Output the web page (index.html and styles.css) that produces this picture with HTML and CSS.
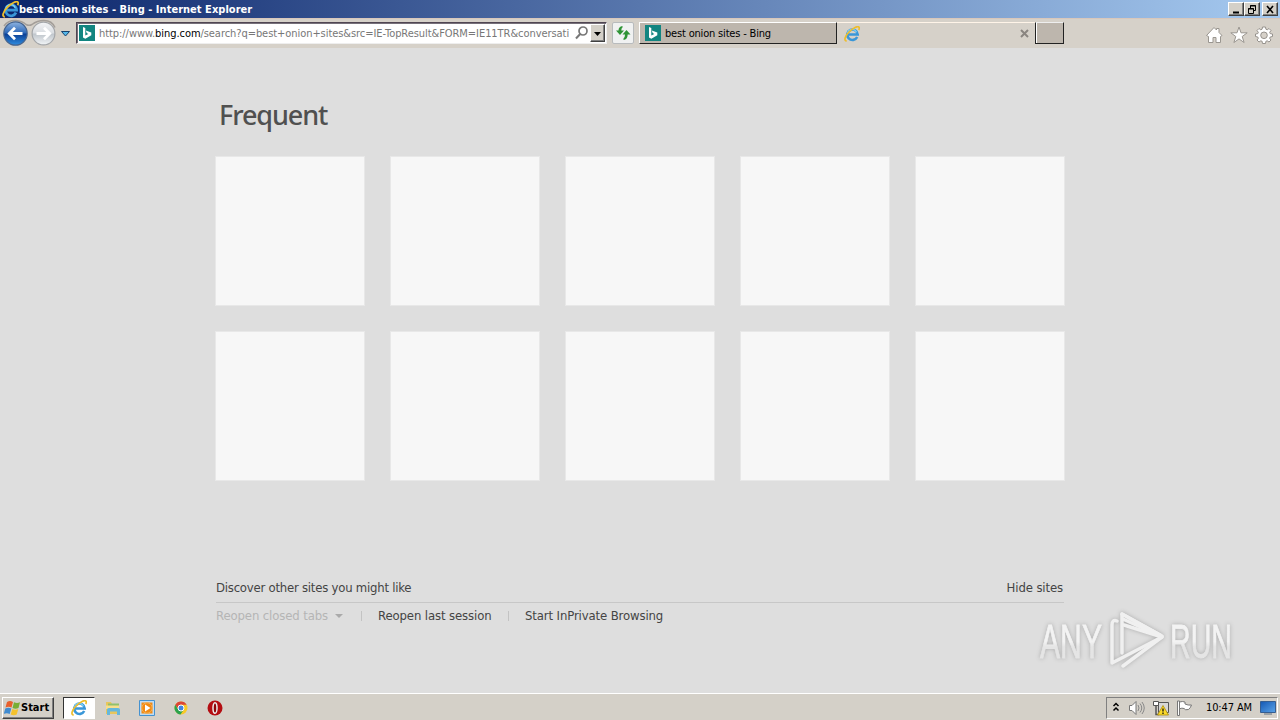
FILE: index.html
```html
<!DOCTYPE html>
<html lang="en">
<head>
    <meta charset="UTF-8">
    <title>best onion sites - Bing - Internet Explorer</title>
    <link rel="stylesheet" href="styles.css">
</head>
<body>
    <svg class="defs" width="0" height="0">
        <defs>
            <linearGradient id="blue" x1="0" y1="0" x2="0" y2="1">
                <stop offset="0" stop-color="#8fb4e0"/>
                <stop offset=".48" stop-color="#2d68b8"/>
                <stop offset=".52" stop-color="#0b3f95"/>
                <stop offset="1" stop-color="#2f8de0"/>
            </linearGradient>
            <linearGradient id="silver" x1="0" y1="0" x2="0" y2="1">
                <stop offset="0" stop-color="#f4f5f7"/>
                <stop offset=".48" stop-color="#d9dde1"/>
                <stop offset=".52" stop-color="#bfc5cb"/>
                <stop offset="1" stop-color="#f2f5f7"/>
            </linearGradient>
            <linearGradient id="screen" x1="0" y1="0" x2="1" y2="1">
                <stop offset="0" stop-color="#1458b4"/>
                <stop offset="1" stop-color="#5ba4e8"/>
            </linearGradient>
            <linearGradient id="letters" x1="0" y1="0" x2="0" y2="1">
                <stop offset=".5" stop-color="#f3f3f3"/>
                <stop offset=".6" stop-color="#e5e5e5"/>
            </linearGradient>
        </defs>
        <symbol id="ie" viewBox="0 0 16 16">
            <path d="M13.2 11A5.2 5.2 0 1 1 13.7 8.500H4.500" fill="none" stroke="#3a97d8" stroke-width="2.600"/>
            <path d="M3.500 7.300a4.700 4.700 0 0 1 9-1" fill="none" stroke="#7fd0f5" stroke-width="1.200"/>
            <path d="M2.700 14.800C-.5 15 1 10 5 6S14-.5 15 1.200c.5.800.2 1.800-.3 2.800" fill="none" stroke="#edbd2d" stroke-width="1.700"/>
        </symbol>
        <symbol id="bing" viewBox="0 0 16 16">
            <path d="M0 0h16v16H0z" fill="#128580"/>
            <path d="M4 2l2.300.9v7.700l3-1.700-1.600-.8-.9-2.500 5.500 2v2.600L6.300 13.700 4 12.400z" fill="#fff"/>
        </symbol>
    </svg>

    <header class="titlebar">
        <svg class="app-icon"><use href="#ie"/></svg>
        <h1>best onion sites - Bing - Internet Explorer</h1>
        <div class="window-buttons">
            <button><svg viewBox="0 0 14 11"><path d="M4 8.500h6" stroke="#000" stroke-width="2"/></svg></button>
            <button><svg viewBox="0 0 14 11"><path d="M5.500 4V1.500h5v5H9M5 2h6M3.500 4.500h5v5h-5zM3 5h6" fill="none" stroke="#000"/></svg></button>
            <button class="close"><svg viewBox="0 0 14 11"><path d="M4 2l6 7M10 2L4 9" stroke="#000" stroke-width="1.600"/></svg></button>
        </div>
    </header>

    <nav class="toolbar">
        <svg class="history" viewBox="0 0 74 30">
            <path d="M4 8Q8 2 16 2.500q6 .5 10 4 3 1.500 6 0 5-4 12-4 8 0 11 7" fill="none" stroke="#a39e99" stroke-width="1.500"/>
            <circle cx="15.500" cy="15.500" r="11.700" fill="url(#blue)" stroke="#46648e" stroke-width="1.200"/>
            <path d="M22.500 15.500H10M15 9.800l-5.700 5.700 5.700 5.700" fill="none" stroke="#fff" stroke-width="2.800"/>
            <circle cx="43.500" cy="15.500" r="11.400" fill="url(#silver)" stroke="#a3a6a9" stroke-width="1.200"/>
            <path d="M36.500 15.500H49M44 9.800l5.700 5.700-5.700 5.700" fill="none" stroke="#fff" stroke-width="2.800"/>
            <path d="M61.500 13.500h8l-4 4.500z" fill="#55b8ea" stroke="#17436e"/>
        </svg>
        <div class="address">
            <svg class="site-icon"><use href="#bing"/></svg>
            <span class="url">http://www.<b>bing.com</b>/search?q=best+onion+sites&amp;src=IE-TopResult&amp;FORM=IE11TR&amp;conversati</span>
            <svg class="search" viewBox="0 0 16 16"><circle cx="9" cy="6" r="4" fill="none" stroke="#777" stroke-width="1.700"/><path d="M6.200 9L2 13.500" stroke="#777" stroke-width="2"/></svg>
            <button class="dropdown"><svg viewBox="0 0 13 15"><path d="M3 6h7L6.500 10z"/></svg></button>
        </div>
        <button class="refresh"><svg viewBox="0 0 20 20"><g fill="#2f9436"><path d="M9.500 3Q5.500 3.500 5.500 7.500H3L7 12l4-4.500H8.300q0-2.500 1.200-3z"/><path d="M10.500 17q4-.5 4.200-5.500H17.500L13.500 7l-4 4.500h2.500q0 3-1.500 4z"/></g></svg></button>
        <div class="tab active">
            <svg><use href="#bing"/></svg>
            <span>best onion sites - Bing</span>
        </div>
        <div class="tab">
            <svg><use href="#ie"/></svg>
            <svg class="tab-close" viewBox="0 0 9 9"><path d="M1 1l7 7M8 1L1 8" stroke="#8a8580" stroke-width="2"/></svg>
        </div>
        <button class="new-tab"></button>
        <div class="tools">
            <svg viewBox="0 0 18 18"><path d="M1.500 9.500L9 1.500l2.500 2.500V2.500h2.500v4l3 3-1.500 1V16.500h-4.500v-5H8v5H3.500v-6z" fill="#fff" stroke="#9a9690"/></svg>
            <svg viewBox="0 0 18 18"><path d="M9 1l2 5.800h6.200l-5 3.700 1.900 6L9 12.900 3.900 16.500l1.900-6-5-3.700H7z" fill="#fff" stroke="#9a9690"/></svg>
            <svg viewBox="0 0 18 18"><path d="M7.500 1h3l.4 2.200 1.300.6L14 2.500 16 4.500l-1.300 1.800.5 1.300 2.300.4v2.500l-2.300.5-.5 1.300L16 14l-2 2-1.800-1.200-1.300.5-.4 2.200h-3l-.4-2.200-1.300-.5L4 16 2 14l1.300-1.700-.5-1.300L.5 10.500V8l2.300-.4.500-1.300L2 4.500l2-2 1.800 1.300 1.300-.6z" fill="#fff" stroke="#96928d"/><circle cx="9" cy="9.300" r="3.300" fill="#d6d1c9" stroke="#96928d"/></svg>
        </div>
    </nav>

    <main class="page">
        <h2>Frequent</h2>
        <div class="tiles">
            <div class="tile"></div>
            <div class="tile"></div>
            <div class="tile"></div>
            <div class="tile"></div>
            <div class="tile"></div>
            <div class="tile"></div>
            <div class="tile"></div>
            <div class="tile"></div>
            <div class="tile"></div>
            <div class="tile"></div>
        </div>
        <div class="discover">
            <a class="other-sites">Discover other sites you might like</a>
            <a class="hide-sites">Hide sites</a>
        </div>
        <div class="session">
            <a class="closed-tabs">Reopen closed tabs</a>
            <i class="arrow"></i>
            <i class="divider"></i>
            <a class="last-session">Reopen last session</a>
            <i class="divider"></i>
            <a class="private">Start InPrivate Browsing</a>
        </div>
        <svg class="watermark" viewBox="0 0 240 80">
            <g fill="url(#letters)" stroke="url(#letters)" stroke-width=".8">
                <text x="20" y="57" textLength="62" lengthAdjust="spacingAndGlyphs">ANY</text>
                <text x="150" y="57" textLength="62" lengthAdjust="spacingAndGlyphs">RUN</text>
            </g>
            <g fill="none" stroke="#f0f0f0" stroke-width="3.500" stroke-linejoin="round" stroke-linecap="round">
                <path d="M97 20q-5-2-5 4v38L142 36 103 18"/>
                <path d="M102 52V13L142 35"/>
                <path d="M102 13l38 21M104 24l38 12-39 29"/>
            </g>
        </svg>
    </main>

    <footer class="taskbar">
        <button class="start">
            <svg viewBox="0 0 17 16"><path d="M3 2q3-2 6 0L7.500 7.500q-3-1.500-6 0z" fill="#e8602c"/><path d="M10 2.300q3 1.500 6 0L14.500 8q-3 1.500-6 0z" fill="#78ae35"/><path d="M1.300 8.500q3-1.500 6 0L5.700 14q-3-1.500-6 0z" fill="#408bd0"/><path d="M8.300 9q3 1.500 6 0l-1.600 5.500q-3 1.500-6 0z" fill="#f4c22e"/></svg>
            <span>Start</span>
        </button>
        <div class="task current"><svg><use href="#ie"/></svg></div>
        <div class="task"><svg viewBox="0 0 16 16"><path d="M1 2h5l1 2h7v10H1z" fill="#e8c65c"/><path d="M3 3.500h11V8H3z" fill="#91c06c"/><path d="M1 5.500h13V9H1z" fill="#f7df8c"/><path d="M2 15V9.500q0-1.500 2-1.500h9q2 0 2 1.500V15h-3v-3.500H5V15z" fill="#65b7dc"/></svg></div>
        <div class="task"><svg viewBox="0 0 16 16"><path d="M.5.500h15v15H.5z" fill="#bfdcf4" stroke="#4592d0"/><path d="M2.500 2.500h11v11h-11z" fill="#f28a13"/><circle cx="8" cy="8" r="5.200" fill="#f28a13" stroke="#f7b051"/><path d="M6 4.500L11.500 8 6 11.500z" fill="#fff"/></svg></div>
        <div class="task"><svg viewBox="0 0 16 16"><circle cx="8" cy="8" r="6.500" fill="#f8c927"/><path d="M2.300 4.800A6.500 6.500 0 0 1 13.700 4.800H8A3.200 3.200 0 0 0 5.200 9.600z" fill="#dc4536"/><path d="M2.300 4.800A6.500 6.500 0 0 0 7.500 14.500L10.800 9.600A3.200 3.200 0 0 1 5.200 9.600z" fill="#2ba24d"/><circle cx="8" cy="8" r="3" fill="#4285df" stroke="#fff"/></svg></div>
        <div class="task"><svg viewBox="0 0 16 16"><circle cx="8" cy="8" r="7.500" fill="#b40d12"/><ellipse cx="8" cy="8" rx="2" ry="5.300" fill="#8d0508" stroke="#eee" stroke-width="1.500"/></svg></div>
        <div class="tray">
            <svg class="chevrons" viewBox="0 0 8 10"><path d="M1.500 4L4 1.500 6.500 4M1.500 8.500L4 6l2.500 2.500" fill="none" stroke="#000" stroke-width="1.500"/></svg>
            <svg class="sound" viewBox="0 0 18 16"><path d="M1.500 5.500H4l4-4v13l-4-4H1.500z" fill="#fff" stroke="#777"/><path d="M10 5q2 3 0 6M12 3.500q3.500 4.500 0 9M14 2q4.500 6 0 12" fill="none" stroke="#888"/></svg>
            <svg class="network" viewBox="0 0 16 16"><path d="M5.500 2.500h10v10h-10z" fill="#d7d7d7" stroke="#555"/><path d="M.5 1.500h5v4h-5z" fill="#fff" stroke="#555"/><path d="M3 5.500v9h3" fill="none" stroke="#555" stroke-width="1.500"/><path d="M10 5.500L15.500 15h-11z" fill="#fbd929" stroke="#a98a09" stroke-width=".8"/><path d="M10 8.500v3M10 12.500V14" stroke="#111" stroke-width="1.300"/></svg>
            <svg class="flag" viewBox="0 0 17 16"><path d="M1.500 1h2v14.500h-2z" fill="#fff" stroke="#777"/><path d="M3.500 2q3-1 5.500 0v2q3 1.500 6.500 1-1 3-3 4.500Q9 10.500 8 8.500q-2-.8-4.500.3z" fill="#fff" stroke="#777"/></svg>
            <time>10:47 AM</time>
            <svg class="monitor" viewBox="0 0 16 14"><path d="M.5.500h15v11H.5z" fill="url(#screen)" stroke="#365e91"/><path d="M4 13h8" stroke="#87909a" stroke-width="1.500"/></svg>
        </div>
    </footer>
</body>
</html>
```
FILE: styles.css
```css
* {
    box-sizing: border-box;
}

body {
    margin: 0;
    width: 1280px;
    height: 720px;
    overflow: hidden;
    display: flex;
    flex-direction: column;
    background: #dedede;
    font-family: "DejaVu Sans Condensed", "Noto Sans", sans-serif;
    font-size: 11px;
    color: #000;
}

svg {
    display: block;
    flex: none;
}

button {
    padding: 0;
    border: 1px solid;
    border-color: #fff #404040 #404040 #fff;
    background: #d4d0c8;
    box-shadow: inset -1px -1px #808080;
    font: inherit;
}

.defs {
    position: absolute;
}

.titlebar {
    height: 18px;
    display: flex;
    align-items: center;
    padding: 0 2px;
    background: linear-gradient(90deg, #0a246a, #a6caf0);
    color: #fff;
}

.app-icon {
    width: 17px;
    height: 17px;
}

.titlebar h1 {
    margin: 1px 0 0;
    font-size: 11px;
    line-height: 17px;
    letter-spacing: .03px;
    white-space: nowrap;
}

.window-buttons {
    display: flex;
    margin-left: auto;
}

.window-buttons button {
    width: 16px;
    height: 14px;
}

.window-buttons svg {
    width: 14px;
    height: 11px;
}

.window-buttons .close {
    margin-left: 2px;
}

.toolbar {
    height: 30px;
    display: flex;
    align-items: flex-start;
    background: #d6d1c9;
    border-top: 1px solid #d9c7bb;
}

.history {
    width: 74px;
    height: 30px;
    margin-top: -1px;
}

.address {
    width: 531px;
    height: 22px;
    margin: 3px 0 0 2px;
    display: flex;
    align-items: center;
    border: 1px solid;
    border-color: #504552 #eee #eee #504552;
    box-shadow: inset 1px 1px #77717a;
    background: #fff;
    color: #777;
}

.site-icon {
    width: 16px;
    height: 16px;
    margin: 0 4px 0 2px;
}

.url {
    width: 475px;
    margin-top: 1px;
    letter-spacing: -.06px;
    white-space: nowrap;
}

.url b {
    color: #000;
    font-weight: normal;
}

.search {
    width: 16px;
    height: 16px;
}

.dropdown {
    width: 15px;
    height: 18px;
}

.dropdown svg {
    width: 13px;
    height: 15px;
}

.refresh {
    width: 22px;
    height: 22px;
    margin: 3px 5px 0 5px;
    border: 1px solid #b8bbbd;
    border-radius: 2px;
    background: #f0f1f1;
    box-shadow: none;
}

.refresh svg {
    width: 20px;
    height: 20px;
}

.tab {
    width: 198px;
    height: 22px;
    margin-top: 3px;
    padding: 0 6px 0 7px;
    display: flex;
    align-items: center;
    border-top: 1px solid #fff4e8;
}

.tab svg {
    width: 16px;
    height: 16px;
}

.tab.active {
    width: 198px;
    padding-left: 5px;
    background: #bdb6ad;
    border: 1px solid;
    border-color: #fff #222 #222 #fff;
}

.tab span {
    margin: 1px 0 0 4px;
    letter-spacing: -.18px;
    white-space: nowrap;
}

.tab .tab-close {
    width: 9px;
    height: 9px;
    margin-left: auto;
}

.new-tab {
    width: 29px;
    height: 22px;
    margin-top: 3px;
    background: #bdb6ad;
    border-color: #222;
    border-top-color: #eee;
    box-shadow: inset 1px 0 #fff;
}

.tools {
    display: flex;
    gap: 7px;
    margin: 7px 7px 0 auto;
}

.tools svg {
    width: 18px;
    height: 18px;
}

.page {
    position: relative;
    height: 645px;
    padding: 48px 216px 0;
    color: #444;
    font-size: 13px;
}

.page h2 {
    height: 61px;
    margin: 0 0 0 3px;
    font: 500 27px/38px "Noto Sans", sans-serif;
    letter-spacing: -1.100px;
    color: #505050;
}

.tiles {
    display: grid;
    grid-template-columns: repeat(5, 148px);
    gap: 27px;
}

.tile {
    height: 148px;
    background: #f7f7f7;
    outline: 1px solid #e8e8e8;
}

.discover {
    display: flex;
    justify-content: space-between;
    height: 31px;
    margin-top: 92px;
    padding: 8px 1px 0 0;
    line-height: 16px;
    border-bottom: 1px solid #c7c7c7;
}

.session {
    display: flex;
    align-items: center;
    height: 25px;
}

.session .closed-tabs {
    color: #b5b5b5;
}

.page a {
    letter-spacing: -.12px;
    white-space: nowrap;
}

.page .other-sites {
    letter-spacing: -.23px;
}

.closed-tabs {
    width: 112px;
}

.last-session {
    width: 114px;
}

.arrow {
    margin-left: 7px;
    border: 4px solid transparent;
    border-top-color: #aaa;
    border-bottom: 0;
}

.divider {
    width: 1px;
    height: 10px;
    margin: 0 16px;
    background: #c3c3c3;
}

.arrow + .divider {
    margin-left: 18px;
}

.watermark {
    position: absolute;
    left: 1020px;
    top: 553px;
    width: 240px;
    height: 80px;
    filter: drop-shadow(0 0 2px #aaa);
}

.watermark text {
    font: 48px "Liberation Sans Narrow", "Liberation Sans", sans-serif;
}

.taskbar {
    height: 27px;
    display: flex;
    align-items: center;
    padding: 1px 2px 0;
    background: #d4d0c8;
    border-top: 1px solid #fff;
}

.start {
    width: 52px;
    height: 22px;
    margin-right: 9px;
    padding-left: 1px;
    display: flex;
    align-items: center;
    font-weight: bold;
}

.start svg {
    width: 17px;
    height: 16px;
}

.task {
    width: 32px;
    height: 22px;
    margin-right: 2px;
    display: grid;
    place-items: center;
}

.task svg {
    width: 16px;
    height: 16px;
}

.current {
    background: #fff;
    border: 1px solid;
    border-color: #333 #fff #fff #333;
}

.tray {
    width: 172px;
    height: 22px;
    margin-left: auto;
    display: flex;
    align-items: center;
    padding-left: 5px;
    border: 1px solid;
    border-color: #808080 #fff #fff #808080;
}

.chevrons {
    width: 8px;
    height: 10px;
    margin-bottom: 2px;
}

.sound {
    width: 18px;
    height: 16px;
    margin-left: 8px;
}

.network {
    width: 16px;
    height: 16px;
    margin-left: 7px;
}

.flag {
    width: 17px;
    height: 16px;
    margin-left: 7px;
}

.tray time {
    width: 47px;
    margin-left: 13px;
    letter-spacing: -.12px;
    white-space: nowrap;
}

.monitor {
    width: 16px;
    height: 14px;
    margin-left: 7px;
}
```
